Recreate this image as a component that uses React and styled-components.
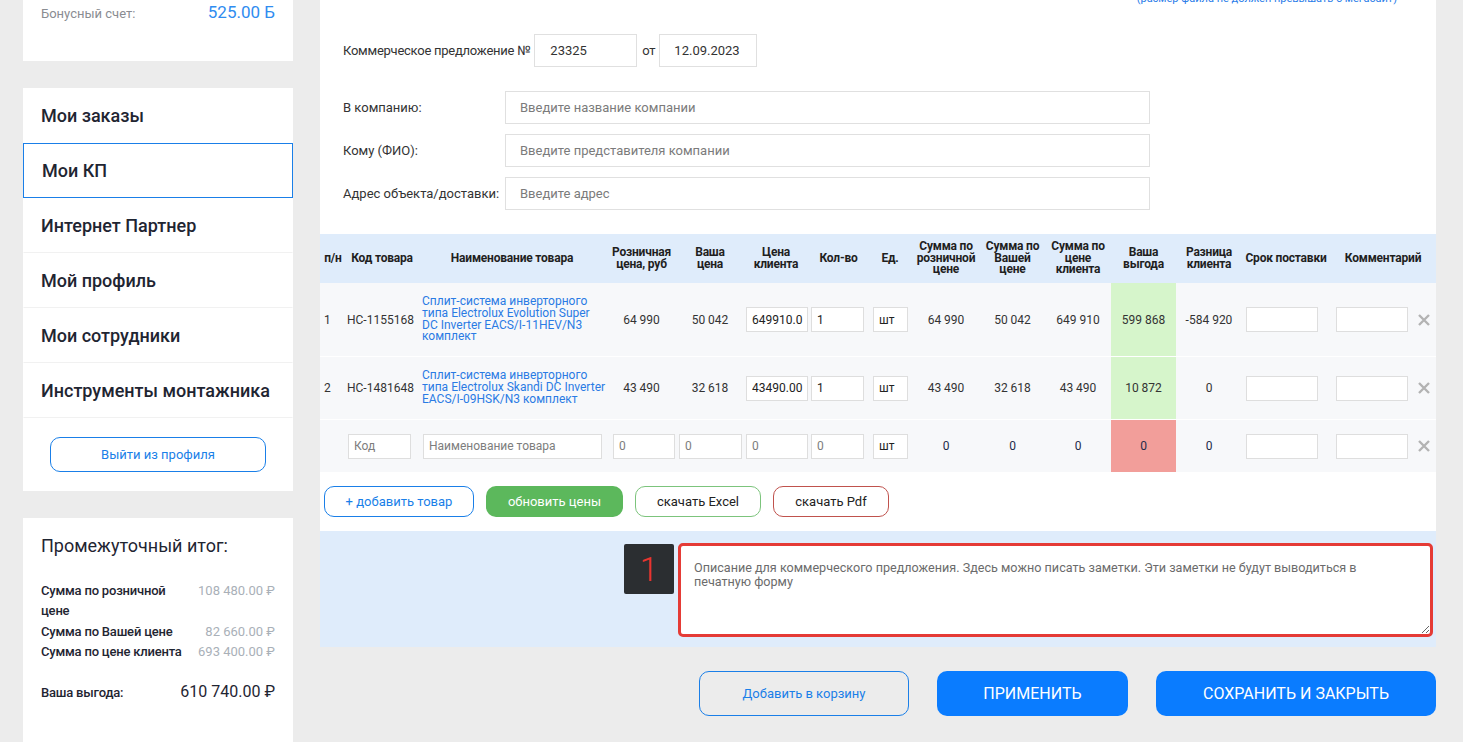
import React from 'react';
import styled, { createGlobalStyle } from 'styled-components';

const Global = createGlobalStyle`
  html, body { margin: 0; padding: 0; background: #ececec; }
  body { font-family: Roboto, "Noto Sans", Arial, sans-serif; overflow: hidden; }
  * { box-sizing: border-box; }
`;

const Page = styled.div`
  display: flex;
  align-items: flex-start;
  gap: 27px;
  padding-left: 23px;
  height: 742px;
  overflow: hidden;
`;

/* ---------- Sidebar ---------- */
const Sidebar = styled.aside`
  width: 270px;
  flex-shrink: 0;
  display: flex;
  flex-direction: column;
  gap: 27px;
`;

const Card = styled.div`
  background: #fff;
`;

const BonusCard = styled(Card)`
  height: 61px;
  padding: 1px 18px 0;
  display: flex;
  justify-content: space-between;
  align-items: baseline;
`;

const BonusLabel = styled.span`
  font-size: 13px;
  color: #8a8d92;
`;

const BonusValue = styled.span`
  font-size: 17px;
  line-height: 22px;
  color: #2f8cf0;
`;

const MenuItem = styled.div`
  height: 55px;
  display: flex;
  align-items: center;
  padding-left: ${p => (p.$active ? 18 : 17)}px;
  font-size: 18px;
  font-weight: 500;
  color: #1f2532;
  border: 1px solid ${p => (p.$active ? '#1a7fe8' : 'transparent')};
  border-bottom-color: ${p => (p.$active ? '#1a7fe8' : p.$sep ? '#f1f1f1' : 'transparent')};
`;

const LogoutWrap = styled.div`
  padding: 19px 0;
  display: flex;
  justify-content: center;
`;

const OutlineButton = styled.button`
  width: ${p => p.$w}px;
  height: ${p => p.$h || 31}px;
  border: 1px solid ${p => p.$border || '#1a7fe8'};
  border-radius: 10px;
  background: ${p => p.$bg || 'transparent'};
  color: ${p => p.$color || '#1a7fe8'};
  font-family: Roboto, Arial, sans-serif;
  font-size: ${p => p.$fs || 13}px;
  padding: 0;
  cursor: pointer;
`;

const TotalsCard = styled(Card)`
  height: 240px;
  padding: 17px 18px 0;
`;

const TotalsTitle = styled.div`
  font-size: 18px;
  color: #1f2532;
  line-height: 22px;
`;

const TotalsGrid = styled.div`
  margin-top: 24px;
  display: grid;
  grid-template-columns: 1fr auto;
  column-gap: 10px;
  font-size: 13px;
  line-height: 20.3px;
`;

const TotLabel = styled.div`
  color: #1f2532;
  font-weight: 500;
  letter-spacing: -0.2px;
`;

const TotValue = styled.div`
  color: #a9b0b8;
  text-align: right;
`;

const ProfitRow = styled.div`
  margin-top: 20px;
  display: flex;
  justify-content: space-between;
  align-items: baseline;
`;

const ProfitLabel = styled.span`
  font-size: 13px;
  font-weight: 500;
  letter-spacing: -0.2px;
  color: #1f2532;
`;

const ProfitValue = styled.span`
  font-size: 16px;
  color: #1f2532;
`;

/* ---------- Main ---------- */
const Main = styled.main`
  width: 1116px;
  flex-shrink: 0;
  display: flex;
  flex-direction: column;
`;

const Panel = styled.section`
  background: #fff;
`;

const FileHint = styled.div`
  margin-top: -8px;
  text-align: right;
  padding-right: 39px;
  font-size: 11px;
  line-height: 13px;
  color: #2b7de9;
`;

const Form = styled.div`
  padding: 29px 0 0 23px;
  font-size: 13px;
  color: #333;
`;

const KpRow = styled.div`
  display: flex;
  align-items: center;
  height: 33px;
`;

const KpLabel = styled.span`
  letter-spacing: -0.25px;
  margin-right: ${p => p.$mr || 0}px;
  margin-left: ${p => p.$ml || 0}px;
`;

const Box = styled.input`
  width: ${p => p.$w}px;
  height: 33px;
  border: 1px solid #e0e0e0;
  background: #fff;
  padding: 0 0 0 ${p => p.$pl || 14}px;
  font-family: Roboto, Arial, sans-serif;
  font-size: 13px;
  color: #333;
  outline: none;
  &::placeholder { color: #7b7b7b; }
`;

const Fields = styled.div`
  margin-top: 24px;
  display: flex;
  flex-direction: column;
  gap: 10px;
`;

const FieldRow = styled.label`
  display: grid;
  grid-template-columns: 162px 645px;
  align-items: center;
`;

/* ---------- Table ---------- */
const COLS = '26px 72px 188px 71px 66px 66px 59px 44px 68px 65px 66px 65px 66px 88px 82px 24px';

const Table = styled.div`
  margin-top: 24px;
`;

const Row = styled.div`
  display: grid;
  grid-template-columns: ${COLS};
  height: ${p => p.$h}px;
  background: ${p => (p.$head ? '#dfecfb' : '#f7f8fa')};
  border-bottom: ${p => (p.$line ? '1px solid #fff' : '0')};
  box-sizing: content-box;
`;

const Cell = styled.div`
  display: flex;
  align-items: center;
  justify-content: ${p => p.$align || 'center'};
  padding-left: ${p => p.$pl || 0}px;
  background: ${p => p.$bg || 'transparent'};
  font-size: 12px;
  color: ${p => p.$c || '#333'};
  min-width: 0;
  text-align: center;
  grid-column: span ${p => p.$span || 1};
`;

const HeadCell = styled(Cell)`
  font-weight: 700;
  color: #1f1f1f;
  line-height: 11.5px;
  letter-spacing: -0.2px;
`;

const ProductLink = styled.a`
  color: #2a7be4;
  font-size: 12px;
  line-height: 11.7px;
  text-align: left;
  white-space: nowrap;
  text-decoration: none;
`;

const CellInput = styled.input`
  width: ${p => p.$w}px;
  height: 25px;
  border: 1px solid #dedede;
  background: #fff;
  padding: 0 0 0 5px;
  font-family: Roboto, Arial, sans-serif;
  font-size: 12px;
  color: #222;
  outline: none;
  &::placeholder { color: #7d7d7d; }
`;

const RemoveIcon = () => (
  <svg width="12" height="12" viewBox="0 0 12 12">
    <path d="M1 1L11 11M11 1L1 11" stroke="#b3b3b3" strokeWidth="2.4" strokeLinecap="butt" />
  </svg>
);

const Actions = styled.div`
  display: flex;
  gap: 12px;
  padding: 14px 0 14px 4px;
`;

const FilledButton = styled.button`
  width: ${p => p.$w}px;
  height: ${p => p.$h || 31}px;
  border: none;
  border-radius: 10px;
  background: ${p => p.$bg};
  color: #fff;
  font-family: Roboto, Arial, sans-serif;
  font-size: ${p => p.$fs || 13}px;
  padding: 0;
  cursor: pointer;
`;

const NoteSection = styled.section`
  background: #dfecfb;
  height: 116px;
  padding: 12px 3px 0 0;
  display: flex;
  justify-content: flex-end;
  align-items: flex-start;
  gap: 4px;
`;

const Badge = styled.div`
  width: 50px;
  height: 50px;
  margin-top: 1px;
  background: #2b2e31;
  border-radius: 2px;
  display: flex;
  align-items: center;
  justify-content: center;
  color: #e8352f;
  font-size: 33px;
  font-weight: 300;
`;

const Note = styled.textarea`
  width: 755px;
  height: 94px;
  border: 3px solid #e53b36;
  border-radius: 5px;
  padding: 15px 13px;
  font-family: Roboto, Arial, sans-serif;
  font-size: 12.6px;
  line-height: 14px;
  color: #333;
  background: #fff;
  resize: vertical;
  outline: none;
  &::placeholder { color: #6b6b6b; }
`;

const Footer = styled.div`
  margin-top: 24px;
  display: flex;
  justify-content: flex-end;
  gap: 28px;
`;

const products = [
  {
    n: '1', code: 'НС-1155168',
    name: ['Сплит-система инверторного', 'типа Electrolux Evolution Super', 'DC Inverter EACS/I-11HEV/N3', 'комплект'],
    retail: '64 990', yours: '50 042', client: '649910.0', qty: '1',
    sRetail: '64 990', sYours: '50 042', sClient: '649 910', profit: '599 868', diff: '-584 920', h: 73,
  },
  {
    n: '2', code: 'НС-1481648',
    name: ['Сплит-система инверторного', 'типа Electrolux Skandi DC Inverter', 'EACS/I-09HSK/N3 комплект'],
    retail: '43 490', yours: '32 618', client: '43490.00', qty: '1',
    sRetail: '43 490', sYours: '32 618', sClient: '43 490', profit: '10 872', diff: '0', h: 62,
  },
];

const menu = ['Мои заказы', 'Мои КП', 'Интернет Партнер', 'Мой профиль', 'Мои сотрудники', 'Инструменты монтажника'];

export default function App() {
  return (
    <>
      <Global />
      <Page>
        <Sidebar>
          <BonusCard>
            <BonusLabel>Бонусный счет:</BonusLabel>
            <BonusValue>525.00 Б</BonusValue>
          </BonusCard>

          <Card>
            {menu.map((m, i) => (
              <MenuItem key={m} $active={i === 1} $sep={i >= 2}>{m}</MenuItem>
            ))}
            <LogoutWrap>
              <OutlineButton $w={216} $h={35}>Выйти из профиля</OutlineButton>
            </LogoutWrap>
          </Card>

          <TotalsCard>
            <TotalsTitle>Промежуточный итог:</TotalsTitle>
            <TotalsGrid>
              <TotLabel>Сумма по розничной цене</TotLabel>
              <TotValue>108 480.00 ₽</TotValue>
              <TotLabel>Сумма по Вашей цене</TotLabel>
              <TotValue>82 660.00 ₽</TotValue>
              <TotLabel>Сумма по цене клиента</TotLabel>
              <TotValue>693 400.00 ₽</TotValue>
            </TotalsGrid>
            <ProfitRow>
              <ProfitLabel>Ваша выгода:</ProfitLabel>
              <ProfitValue>610 740.00 ₽</ProfitValue>
            </ProfitRow>
          </TotalsCard>
        </Sidebar>

        <Main>
          <Panel>
            <FileHint>(размер файла не должен превышать 5 мегабайт)</FileHint>
            <Form>
              <KpRow>
                <KpLabel $mr={4}>Коммерческое предложение №</KpLabel>
                <Box $w={103} $pl={15} defaultValue="23325" />
                <KpLabel $ml={5} $mr={4}>от</KpLabel>
                <Box $w={98} $pl={14} defaultValue="12.09.2023" />
              </KpRow>
              <Fields>
                <FieldRow>
                  <span>В компанию:</span>
                  <Box $w={645} placeholder="Введите название компании" />
                </FieldRow>
                <FieldRow>
                  <span>Кому (ФИО):</span>
                  <Box $w={645} placeholder="Введите представителя компании" />
                </FieldRow>
                <FieldRow>
                  <span>Адрес объекта/доставки:</span>
                  <Box $w={645} placeholder="Введите адрес" />
                </FieldRow>
              </Fields>
            </Form>

            <Table>
              <Row $head $h={49}>
                <HeadCell>п/н</HeadCell>
                <HeadCell>Код товара</HeadCell>
                <HeadCell>Наименование товара</HeadCell>
                <HeadCell>Розничная<br />цена, руб</HeadCell>
                <HeadCell>Ваша<br />цена</HeadCell>
                <HeadCell>Цена<br />клиента</HeadCell>
                <HeadCell>Кол-во</HeadCell>
                <HeadCell>Ед.</HeadCell>
                <HeadCell>Сумма по<br />розничной<br />цене</HeadCell>
                <HeadCell>Сумма по<br />Вашей<br />цене</HeadCell>
                <HeadCell>Сумма по<br />цене<br />клиента</HeadCell>
                <HeadCell>Ваша<br />выгода</HeadCell>
                <HeadCell>Разница<br />клиента</HeadCell>
                <HeadCell>Срок поставки</HeadCell>
                <HeadCell $span={2}>Комментарий</HeadCell>
              </Row>

              {products.map(p => (
                <Row key={p.n} $h={p.h} $line>
                  <Cell $align="flex-start" $pl={4}>{p.n}</Cell>
                  <Cell $align="flex-start" $pl={1}>{p.code}</Cell>
                  <Cell $align="flex-start" $pl={4}>
                    <ProductLink href="#">
                      {p.name.map((l, i) => (
                        <React.Fragment key={i}>{l}{i < p.name.length - 1 && <br />}</React.Fragment>
                      ))}
                    </ProductLink>
                  </Cell>
                  <Cell>{p.retail}</Cell>
                  <Cell>{p.yours}</Cell>
                  <Cell $align="flex-start" $pl={3}><CellInput $w={62} defaultValue={p.client} /></Cell>
                  <Cell $align="flex-start" $pl={2}><CellInput $w={53} defaultValue={p.qty} /></Cell>
                  <Cell $align="flex-start" $pl={5}><CellInput $w={35} defaultValue="шт" /></Cell>
                  <Cell>{p.sRetail}</Cell>
                  <Cell>{p.sYours}</Cell>
                  <Cell>{p.sClient}</Cell>
                  <Cell $bg="#d6f5cb">{p.profit}</Cell>
                  <Cell>{p.diff}</Cell>
                  <Cell $align="flex-start" $pl={4}><CellInput $w={72} /></Cell>
                  <Cell $align="flex-start" $pl={6}><CellInput $w={72} /></Cell>
                  <Cell $align="flex-start" $pl={6}><RemoveIcon /></Cell>
                </Row>
              ))}

              <Row $h={52}>
                <Cell />
                <Cell $align="flex-start" $pl={2}><CellInput $w={63} placeholder="Код" /></Cell>
                <Cell $align="flex-start" $pl={5}><CellInput $w={179} placeholder="Наименование товара" /></Cell>
                <Cell $align="flex-start" $pl={7}><CellInput $w={62} placeholder="0" /></Cell>
                <Cell $align="flex-start" $pl={2}><CellInput $w={63} placeholder="0" /></Cell>
                <Cell $align="flex-start" $pl={3}><CellInput $w={62} placeholder="0" /></Cell>
                <Cell $align="flex-start" $pl={2}><CellInput $w={53} placeholder="0" /></Cell>
                <Cell $align="flex-start" $pl={5}><CellInput $w={35} defaultValue="шт" /></Cell>
                <Cell $c="#1e2b4a">0</Cell>
                <Cell $c="#1e2b4a">0</Cell>
                <Cell $c="#1e2b4a">0</Cell>
                <Cell $bg="#f29e9a" $c="#1e2b4a">0</Cell>
                <Cell $c="#1e2b4a">0</Cell>
                <Cell $align="flex-start" $pl={4}><CellInput $w={72} /></Cell>
                <Cell $align="flex-start" $pl={6}><CellInput $w={72} /></Cell>
                <Cell $align="flex-start" $pl={6}><RemoveIcon /></Cell>
              </Row>
            </Table>

            <Actions>
              <OutlineButton $w={150}>+ добавить товар</OutlineButton>
              <FilledButton $w={137} $bg="#5cb85c">обновить цены</FilledButton>
              <OutlineButton $w={126} $border="#7cc47c" $color="#222">скачать Excel</OutlineButton>
              <OutlineButton $w={116} $border="#c0524d" $color="#222">скачать Pdf</OutlineButton>
            </Actions>
          </Panel>

          <NoteSection>
            <Badge>1</Badge>
            <Note placeholder={'Описание для коммерческого предложения. Здесь можно писать заметки. Эти заметки не будут выводиться в\nпечатную форму'} />
          </NoteSection>

          <Footer>
            <OutlineButton $w={210} $h={45}>Добавить в корзину</OutlineButton>
            <FilledButton $w={191} $h={45} $bg="#0a7cff" $fs={16}>ПРИМЕНИТЬ</FilledButton>
            <FilledButton $w={280} $h={45} $bg="#0a7cff" $fs={16}>СОХРАНИТЬ И ЗАКРЫТЬ</FilledButton>
          </Footer>
        </Main>
      </Page>
    </>
  );
}
